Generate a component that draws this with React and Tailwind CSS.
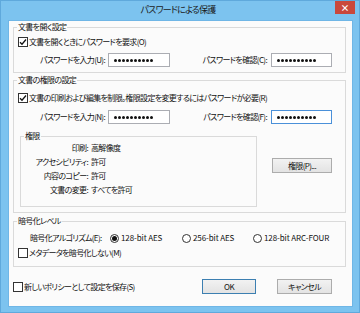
import React from "react";

const Check = ({ checked }) => (
  <span className="w-[10px] h-[10px] border border-[#333] bg-white flex items-center justify-center shrink-0">
    {checked && (
      <svg width="8" height="8" viewBox="0 0 8 8">
        <path d="M1 4.2 L3 6.2 L7 1.5" fill="none" stroke="#111" strokeWidth="1.3" />
      </svg>
    )}
  </span>
);

const Radio = ({ checked }) => (
  <span className="w-[9px] h-[9px] rounded-full border border-[#333] bg-white flex items-center justify-center shrink-0">
    {checked && <span className="w-[5px] h-[5px] rounded-full bg-[#111]" />}
  </span>
);

const Dots = () => (
  <span className="flex gap-[1px] items-center">
    {Array.from({ length: 10 }).map((_, i) => (
      <span key={i} className="w-[3px] h-[3px] rounded-full bg-[#111]" />
    ))}
  </span>
);

const Input = ({ focused, w }) => (
  <div
    className={`h-[14px] ${w} bg-white border flex items-center pl-[5px] ${
      focused ? "border-[#4a90d9]" : "border-[#abadb3]"
    }`}
  >
    <Dots />
  </div>
);

const Legend = ({ children }) => (
  <legend className="ml-[3px] px-[1px] leading-[10px] h-[10px]">{children}</legend>
);

const Btn = ({ children, def, w }) => (
  <div
    className={`h-[15px] ${w} flex items-center justify-center border bg-gradient-to-b from-[#f2f2f2] to-[#e3e3e3] ${
      def ? "border-[#3c7fb1]" : "border-[#acacac]"
    }`}
  >
    {children}
  </div>
);

const PwRow = ({ l1, l2, focus2 }) => (
  <div className="flex items-center h-[14px]">
    <div className="w-[91px] flex justify-end whitespace-nowrap">{l1}</div>
    <div className="w-[3px]" />
    <Input w="w-[62px]" />
    <div className="w-[97px] flex justify-end whitespace-nowrap">{l2}</div>
    <div className="w-[4px]" />
    <Input w="w-[61px]" focused={focus2} />
  </div>
);

const PermRow = ({ label, value }) => (
  <div className="flex items-center h-[14px]">
    <div className="w-[67px] flex justify-end whitespace-nowrap">{label}</div>
    <div className="ml-[3px] whitespace-nowrap">{value}</div>
  </div>
);

export default function App() {
  return (
    <div className="w-[360px] h-[313px] bg-[#7cc3ef] border border-[#5fa9dc] flex flex-col font-['Noto_Sans_CJK_JP',sans-serif] text-[8px] tracking-[-0.65px] [font-feature-settings:'palt'] text-[#111] overflow-hidden">
      <div className="h-[19px] flex items-start">
        <div className="flex-1 flex justify-center pt-[3px] pl-[20px] text-[9px] tracking-[-0.8px] text-[#1b1b1b] leading-[11px]">
          パスワードによる保護
        </div>
        <div className="w-[20px] h-[14px] bg-[#c9483c] mr-[4px] -mt-[1px] flex items-center justify-center text-white text-[9px] font-bold tracking-normal leading-none">
          ×
        </div>
      </div>
      <div className="flex-1 ml-[7px] mr-[6px] mb-[5px] bg-[#fbfbfb] border border-[#6fb6e6] flex flex-col pl-[4px] pr-[6px]">
        {/* group 1 */}
        <fieldset className="mt-[1px] border border-[#dadada] px-0 pt-[4px] pb-[5px]">
          <Legend>文書を開く設定</Legend>
          <div className="flex items-center h-[12px] pl-[4px]">
            <Check checked />
            <span className="ml-[1px] whitespace-nowrap">文書を開くときにパスワードを要求(O)</span>
          </div>
          <div className="mt-[5px]">
            <PwRow l1="パスワードを入力(U):" l2="パスワードを確認(C):" />
          </div>
        </fieldset>

        {/* group 2 */}
        <fieldset className="mt-[2px] border border-[#dadada] pt-[7px] pb-[5px]">
          <Legend>文書の権限の設定</Legend>
          <div className="flex items-center h-[12px] pl-[4px]">
            <Check checked />
            <span className="ml-[1px] whitespace-nowrap">文書の印刷および編集を制限。権限設定を変更するにはパスワードが必要(R)</span>
          </div>
          <div className="mt-[6px]">
            <PwRow l1="パスワードを入力(N):" l2="パスワードを確認(F):" focus2 />
          </div>
          <div className="flex items-start mt-[7px]">
            <fieldset className="ml-[6px] w-[237px] border border-[#dadada] pb-[9px]">
              <Legend>権限</Legend>
              <PermRow label="印刷:" value="高解像度" />
              <PermRow label="アクセシビリティ:" value="許可" />
              <PermRow label="内容のコピー:" value="許可" />
              <PermRow label="文書の変更:" value="すべてを許可" />
            </fieldset>
            <div className="ml-[15px] mt-[27px]">
              <Btn w="w-[60px]">権限(P)...</Btn>
            </div>
          </div>
        </fieldset>

        {/* group 3 */}
        <fieldset className="mt-[3px] border border-[#dadada] pt-[6px] pb-[7px]">
          <Legend>暗号化レベル</Legend>
          <div className="flex items-center h-[12px] pl-[16px] whitespace-nowrap">
            <div className="w-[80px]">暗号化アルゴリズム(E):</div>
            <div className="w-[72px] flex items-center">
              <Radio checked />
              <span className="ml-[2px] tracking-[-0.1px]">128-bit AES</span>
            </div>
            <div className="w-[71px] flex items-center">
              <Radio />
              <span className="ml-[2px] tracking-[-0.1px]">256-bit AES</span>
            </div>
            <div className="flex items-center">
              <Radio />
              <span className="ml-[2px] tracking-[-0.1px]">128-bit ARC-FOUR</span>
            </div>
          </div>
          <div className="flex items-center h-[12px] pl-[4px] mt-[3px]">
            <Check />
            <span className="ml-[1px] whitespace-nowrap">メタデータを暗号化しない(M)</span>
          </div>
        </fieldset>

        {/* bottom row */}
        <div className="flex items-center mt-[12px] h-[15px] whitespace-nowrap">
          <Check />
          <span className="ml-[1px]">新しいポリシーとして設定を保存(S)</span>
          <div className="flex-1" />
          <Btn def w="w-[54px]">OK</Btn>
          <div className="w-[21px]" />
          <Btn w="w-[55px]">キャンセル</Btn>
          <div className="w-[14px]" />
        </div>
      </div>
    </div>
  );
}
